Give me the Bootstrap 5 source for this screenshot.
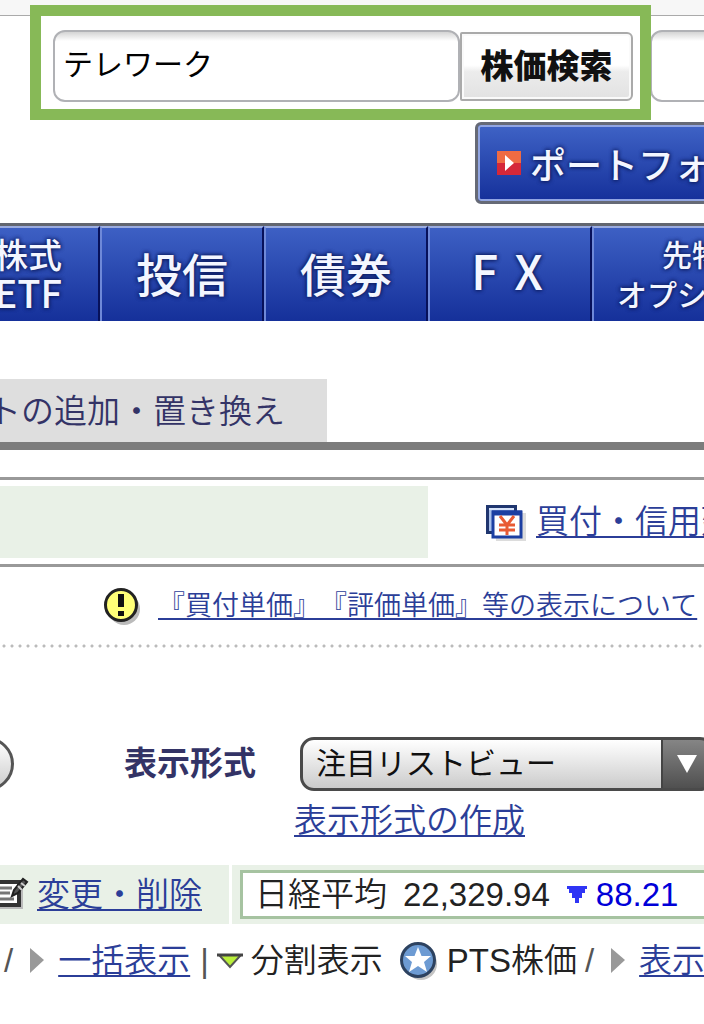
<!DOCTYPE html>
<html lang="ja">
<head>
<meta charset="utf-8">
<meta name="viewport" content="width=device-width, initial-scale=1">
<title>ポートフォリオ</title>
<link href="https://cdn.jsdelivr.net/npm/bootstrap@5.3.0/dist/css/bootstrap.min.css" rel="stylesheet">
<style>
:root{--ink:#333366;--link:#2b3e98;--pale:#e9f1e7}
body{font-family:"Liberation Sans","Noto Sans CJK JP",sans-serif;font-size:33px;font-weight:350;line-height:40px;color:#222;background:#fff;overflow-x:hidden}
a{color:var(--link);text-decoration-thickness:2px;text-underline-offset:3px;text-decoration-skip-ink:none}
svg{flex:none;display:block}
.page{overflow:hidden}
.topline{height:16px;background:#f7f7f7;border-bottom:1px solid #aaa}
.search-row{padding:14px 0 0 53px}
.search-set{width:580px}
.frame{position:absolute;inset:-25px -18px -18px -23px;border:11px solid #87b957;pointer-events:none}
.field{height:72px;border:2px solid #b0b1b5;border-radius:12px;padding:0 8px 8px;font-size:30px;color:#000;background:linear-gradient(#d4d4d4,#fff 9px);min-width:0}
.field-next{width:300px;margin-left:17px}
.btn-find{height:69px;width:173px;border:2px solid #aaa;border-radius:2px 6px 6px 2px;background:linear-gradient(#fff 48%,#ececec 58%,#e2e2e2);font-size:33px;font-weight:900;line-height:33px;color:#111;padding:0;box-shadow:inset 0 0 0 2px #fafafa}
.glow{color:#f3f6ff;font-family:"Noto Sans CJK JP",sans-serif;font-weight:500;text-shadow:0 0 4px #0b1a5c,0 0 4px #0b1a5c}
.portfolio-row{margin-top:20px}
.btn-portfolio{width:328px;height:82px;margin-right:-99px;border:3px solid #666a76;border-radius:6px;background:linear-gradient(#3f63c6,#15309a);box-shadow:inset 0 0 0 2px #91a5e2;padding:0 0 0 18px;font-size:36px;line-height:40px}
.mainnav{height:98px;margin:19px 0 0 -65px;border-top:3px solid #62666f;background:#15309a}
.mainnav a{flex:0 0 164px;text-decoration:none;text-align:center;font-size:46px;line-height:46px;background:linear-gradient(#3d60c4,#15309a);border-top:2px solid #9aabdf;border-left:2px solid #6f89d8;border-right:2px solid #07115a;padding-bottom:6px}
.mainnav a.first{flex-basis:165px;font-size:34px;line-height:38px;text-align:right;padding-right:36px;padding-bottom:4px}
.mainnav .caps{font-size:38px}
.mainnav a.latin{font-size:48px;gap:16px;padding-right:6px;padding-bottom:12px}
.mainnav a.wide{flex-basis:200px;font-size:30px;line-height:40px;padding-bottom:4px}
.tabs{margin-top:58px;border-bottom:8px solid #7c7c7c}
.tab{width:327px;height:63px;background:#dedede;color:var(--ink);padding:2px 42px 0 0;text-decoration:none}
.strip{margin-top:27px;border-top:3px solid #999;border-bottom:3px solid #999;height:90px;padding:6px 0}
.strip-fill{width:428px;background:var(--pale)}
.note{height:77px;padding-left:102px;font-size:27px;text-spacing-trim:space-all}
.dots{height:4px;background:radial-gradient(circle,#bbb 1px,#fff 2px) 0 0/8px 4px}
.view-row{margin-top:89px}
.pill{width:60px;height:54px;margin-left:-46px;border:3px solid #555;border-radius:27px;background:linear-gradient(#fff,#ccc)}
.view-label{width:130px;margin:0 46px 0 110px;color:var(--ink);font-weight:700;white-space:nowrap}
.view-pick{flex:0 0 414px;height:54px;border:3px solid #4a4a4a;border-radius:14px;padding:0 13px;font-size:30px;line-height:44px;color:#111;appearance:none;
background:url("data:image/svg+xml,%3Csvg xmlns='http://www.w3.org/2000/svg' width='20' height='18'%3E%3Cpath d='M0 0h20l-10 18z' fill='white'/%3E%3C/svg%3E") right 14px center no-repeat,linear-gradient(#444,#444) right 48px top/2px 100% no-repeat,linear-gradient(#858585,#505050) right/48px 100% no-repeat,linear-gradient(#fff,#cbcbcb)}
.make{padding:10px 0 0 294px}
.status{margin-top:24px;height:59px;gap:3px}
.edit{width:229px;background:var(--pale)}
.quote{background:var(--pale);padding:5px 0 5px 8px}
.quote-box{width:520px;border:3px solid #a6c3a1;background:#fff;padding-left:12px}
.down{color:#0000d8}
.modes{margin-top:17px;white-space:nowrap}
.modes .sep{color:#555}
.modes a{margin-left:13px}
.modes .bar{margin-left:10px}
</style>
</head>
<body>
<div class="page">
  <div class="topline"></div>
  <form class="search-row d-flex">
    <div class="search-set position-relative d-flex align-items-center flex-shrink-0">
      <input class="field flex-grow-1" type="text" value="テレワーク" aria-label="銘柄">
      <button class="btn-find flex-shrink-0" type="button">株価検索</button>
      <div class="frame"></div>
    </div>
    <input class="field field-next flex-shrink-0" type="text" aria-label="検索">
  </form>

  <div class="portfolio-row d-flex justify-content-end">
    <button class="btn-portfolio glow d-flex align-items-center flex-shrink-0 text-nowrap" type="button">
      <svg class="me-2" width="26" height="26" viewBox="0 0 26 26"><path d="M1 1h24v12H1z" fill="#ef6b43"/><path d="M1 13h24v12H1z" fill="#d52839"/><path d="M9 5l9 8-9 8z" fill="#fff"/></svg>ポートフォリオ
    </button>
  </div>

  <nav class="mainnav d-flex">
    <a class="glow first d-flex flex-column justify-content-center" href="#"><span>株式</span><span class="caps">ETF</span></a>
    <a class="glow d-flex align-items-center justify-content-center" href="#">投信</a>
    <a class="glow d-flex align-items-center justify-content-center" href="#">債券</a>
    <a class="glow latin d-flex align-items-center justify-content-center" href="#"><span>F</span><span>X</span></a>
    <a class="glow wide d-flex flex-column justify-content-center" href="#"><span>先物</span><span>オプション</span></a>
  </nav>

  <div class="tabs d-flex">
    <a class="tab d-flex align-items-center justify-content-end text-nowrap" href="#">トの追加・置き換え</a>
  </div>

  <div class="strip d-flex text-nowrap">
    <div class="strip-fill flex-shrink-0"></div>
    <div class="d-flex align-items-center ms-5 ps-2">
      <svg width="44" height="42" viewBox="0 0 44 42"><path d="M10 12h32v28H12z" fill="#dcdcdc"/><path d="M3.500 5.500h28v26h-28z" fill="#a9c0ea" stroke="#20366f" stroke-width="3"/><path d="M5 8h25" stroke="#d7e4fa" stroke-width="2"/><path d="M9 11h28v25H9z" fill="#fff" stroke="#1c3fa2" stroke-width="3"/><path d="M8 12h30" stroke="#1c3fa2" stroke-width="5"/><path d="M16 15l7 9 7-9M15 24h16M15 29h16M23 24v10" fill="none" stroke="#e85a34" stroke-width="3"/></svg>
      <a class="ms-2" href="#">買付・信用建余力</a>
    </div>
  </div>

  <div class="note d-flex align-items-center text-nowrap">
    <svg width="40" height="40" viewBox="0 0 40 40"><circle cx="22" cy="23" r="16" fill="#bbb"/><circle cx="19" cy="19" r="15.500" fill="#ffff78" stroke="#222" stroke-width="3"/><path d="M19 8v13M19 25v5" stroke="#111" stroke-width="6"/></svg>
    <a class="ms-3" href="#">『買付単価』『評価単価』等の表示について</a>
  </div>
  <div class="dots"></div>

  <div class="view-row d-flex align-items-center">
    <button class="pill flex-shrink-0" type="button" aria-label="切替"></button>
    <label class="view-label flex-shrink-0" for="view">表示形式</label>
    <select class="view-pick" id="view"><option>注目リストビュー</option></select>
  </div>
  <div class="make"><a href="#">表示形式の作成</a></div>

  <div class="status d-flex text-nowrap">
    <div class="edit d-flex align-items-center flex-shrink-0">
      <svg width="29" height="36" viewBox="0 0 29 36"><path d="M0 8h23v24H0" fill="#bbb"/><path d="M-3 5h22v23H-3" fill="#fff" stroke="#333" stroke-width="4"/><path d="M0 11h12M0 16h10M0 22h14" stroke="#777" stroke-width="3"/><path d="M12 19l2-6L23 2l4 3-9 11z" fill="#555" stroke="#222" stroke-width="2"/><path d="M18 9l4 4M21 6l4 3" stroke="#ccc" stroke-width="2"/></svg>
      <a class="ms-2" href="#">変更・削除</a>
    </div>
    <div class="quote flex-shrink-0 d-flex">
      <div class="quote-box d-flex align-items-center">
        <span>日経平均</span><span class="ms-3">22,329.94</span>
        <svg class="mx-2 ms-3" width="22" height="18" viewBox="0 0 22 18"><path d="M1 0h20v3h-2v4h-3v5h-3v5H9v-5H6V7H3V3H1z" fill="#2f35f5"/></svg>
        <span class="down">88.21</span>
      </div>
    </div>
  </div>

  <div class="modes d-flex align-items-center">
    <span class="sep ms-1">/</span>
    <svg class="ms-3" width="16" height="26" viewBox="0 0 16 26"><path d="M1 0l14 12L1 25z" fill="#999"/></svg>
    <a href="#">一括表示</a>
    <span class="sep bar">|</span>
    <svg class="mx-2" width="26" height="16" viewBox="0 0 26 16"><path d="M2 2h22L13 14z" fill="#b9ef3a" stroke="#555" stroke-width="2"/><path d="M0 2h26" stroke="#444" stroke-width="3"/></svg>
    <span>分割表示</span>
    <svg class="ms-3 me-2" width="40" height="40" viewBox="0 0 40 40"><circle cx="22" cy="23" r="16" fill="#c4c4c4"/><circle cx="19" cy="19" r="16.500" fill="#6d9bd3" stroke="#2d4260" stroke-width="3"/><path d="M19 6l3.500 9H32l-7 6 3 10-9-6-9 6 3-10-7-6h9.500z" fill="#fff"/></svg>
    <span>PTS株価</span>
    <span class="sep ms-2">/</span>
    <svg class="ms-3" width="16" height="26" viewBox="0 0 16 26"><path d="M1 0l14 12L1 25z" fill="#999"/></svg>
    <a href="#">表示</a>
  </div>
</div>
<script src="https://cdn.jsdelivr.net/npm/bootstrap@5.3.0/dist/js/bootstrap.bundle.min.js"></script>
</body>
</html>
